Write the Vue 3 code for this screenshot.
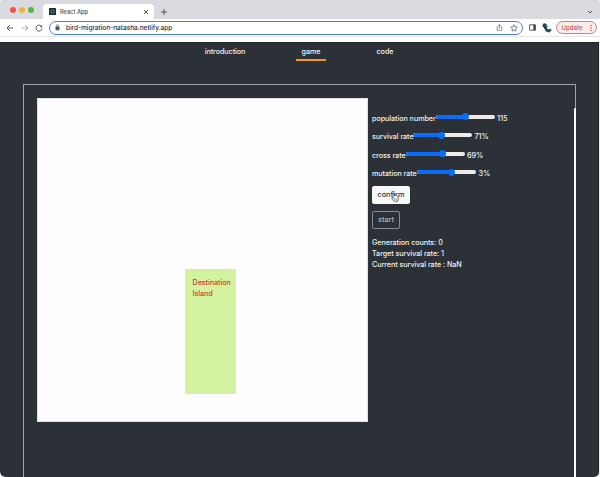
<script setup>
import { ref } from 'vue'

const sliders = ref([
  { label: 'population number', value: '115', width: 63.5, pos: 50 },
  { label: 'survival rate', value: '71%', width: 41, pos: 48 },
  { label: 'cross rate', value: '69%', width: 33.5, pos: 62 },
  { label: 'mutation rate', value: '3%', width: 45, pos: 59 }
])
</script>

<template>
  <div class="window">
    <header class="tabstrip">
      <div class="lights"><i class="red"></i><i class="yellow"></i><i class="green"></i></div>
      <div class="tab">
        <svg class="favicon" viewBox="0 0 8 8"><rect width="8" height="8" rx="1" fill="#20242a" /><g fill="none" stroke="#3c8797" stroke-width=".5"><ellipse cx="4" cy="4" rx="3" ry="1.2" /><ellipse cx="4" cy="4" rx="3" ry="1.2" transform="rotate(60 4 4)" /><ellipse cx="4" cy="4" rx="3" ry="1.2" transform="rotate(120 4 4)" /></g></svg>
        <span>React App</span>
        <svg class="close" viewBox="0 0 6 6"><path d="M1 1 5 5M5 1 1 5" /></svg>
      </div>
      <svg class="plus" viewBox="0 0 8 8"><path d="M4 1v6M1 4h6" /></svg>
      <svg class="chevron" viewBox="0 0 6 6"><path d="m1 2 2 2 2-2" /></svg>
    </header>
    <div class="toolbar">
      <svg class="nav back" viewBox="0 0 8 8"><path d="M7 4H1M4 1 1 4l3 3" /></svg>
      <svg class="nav forward" viewBox="0 0 8 8"><path d="M1 4h6M4 1l3 3-3 3" /></svg>
      <svg class="nav reload" viewBox="0 0 8 8"><path d="M6.5 2.4A3 3 0 1 0 7 4.5" /><path d="M7.2.8v2.4H4.8z" fill="#4a4d51" stroke="none" /></svg>
      <div class="address">
        <svg class="lock" viewBox="0 0 5 7"><rect x=".5" y="2.6" width="4" height="3.6" rx=".4" fill="#4f5256" /><path d="M1.4 3V1.8a1.1 1.1 0 0 1 2.2 0V3" fill="none" stroke="#4f5256" stroke-width=".7" /></svg>
        <span>bird-migration-natasha.netlify.app</span>
        <svg class="share" viewBox="0 0 7 7"><path d="M2.3 2.8H1.1v3.5h4.8V2.8H4.7M3.5 4.6V.7M2.2 1.9 3.5.6l1.3 1.3" /></svg>
        <svg class="star" viewBox="0 0 8 8"><path d="m4 .8 1 2.1 2.3.3-1.7 1.6.4 2.3-2-1.1-2 1.1.4-2.3L.7 3.2 3 2.9z" /></svg>
      </div>
      <svg class="panel" viewBox="0 0 7 7"><path d="M.6.8h5.8v5.4H.6z" fill="none" stroke="#46494d" stroke-width=".9" /><path d="M4.3.8h2.1v5.4H4.3z" fill="#46494d" /></svg>
      <svg class="avatar" viewBox="0 0 10 10"><path d="M1.2.7Q2.8-.3 4.4 1.2L5.5 3.7 4.9 5.8 2.4 5.6.3 3z" fill="#18435a" /><path d="M4.5 6.2 9.5 6Q9.7 8.6 7.2 9.4 4 9.3 4.5 6.2z" fill="#20547b" /><path d="m2 5 2.5.1 2 2.7-2.2.9z" fill="#25354a" /><circle cx="4.6" cy="2.8" r=".9" fill="#6b9d65" /></svg>
      <button class="update"><span>Update</span><svg viewBox="0 0 2 8"><g fill="#c45454"><circle cx="1" cy="1.4" r=".75" /><circle cx="1" cy="4" r=".75" /><circle cx="1" cy="6.6" r=".75" /></g></svg></button>
    </div>
    <main class="page">
      <nav class="menu"><a class="intro">introduction</a><a class="game">game</a><a class="code">code</a></nav>
      <section class="frame">
        <div class="board">
          <div class="island">Destination<br />Island</div>
        </div>
        <div class="controls">
          <div v-for="s in sliders" :key="s.label" class="row">
            <label :style="{ width: s.width + 'px' }">{{ s.label }}</label>
            <div class="track"><div class="fill" :style="{ width: s.pos + '%' }"><i class="thumb"></i></div></div>
            <span class="value">{{ s.value }}</span>
          </div>
          <button class="confirm">confirm
            <svg class="pointer" viewBox="0 0 8 10"><path d="M2.2 5.8V1.2q.7-.9 1.3 0v2.6l.3-.6q.7-.5 1.1.1l.2.4q.7-.5 1.1.1l.1.4q.8-.3 1 .4v2.1L6.5 9.2H3.2L.7 6.1q.1-1 1.5-.3z" fill="#fff" stroke="#24272a" stroke-width=".7" /><path d="M3.8 6v1.8M5.2 6v1.8" stroke="#24272a" stroke-width=".5" /></svg>
          </button>
          <button class="start">start</button>
          <div class="stats"><p>Generation counts: 0</p><p>Target survival rate: 1</p><p>Current survival rate : NaN</p></div>
        </div>
        <div class="scrollbar"></div>
      </section>
    </main>
  </div>
</template>

<style>
body { margin: 0; background: #fff; overflow: hidden; }
</style>
<style scoped>
* { box-sizing: border-box; }
svg { display: block; flex: none; fill: none; }
button { font: inherit; }
.window { width: 600px; height: 477px; overflow: hidden; border-radius: 3px 3px 5px 5px; background: #e9eaec; font-family: Inter, "Liberation Sans", sans-serif; font-size: 7.3px; font-weight: 500; letter-spacing: -.06px; }
.tabstrip { height: 19px; width: 600px; background: #d9dbe1; display: flex; align-items: center; }
.lights { display: flex; gap: 3.2px; margin-left: 9.5px; width: 33.5px; }
.lights i { width: 6px; height: 6px; border-radius: 50%; flex: none; }
.red { background: #f15348; }
.yellow { background: #efb33b; }
.green { background: #53b93a; }
.tab { width: 111px; height: 15px; margin-top: 4px; border-radius: 4px 4px 0 0; background: #fff; display: flex; align-items: center; padding: 0 5px 0 6px; font-size: 5.8px; color: #505257; }
.favicon { width: 7px; height: 7px; margin-right: 4px; }
.close { width: 6px; height: 6px; margin-left: auto; stroke: #505257; stroke-width: 1; }
.plus { width: 8px; height: 8px; margin: 4px 0 0 6px; stroke: #53565c; stroke-width: 1; }
.chevron { width: 6px; height: 6px; margin: 4px 7px 0 auto; stroke: #54575c; stroke-width: 1; }
.toolbar { height: 23px; width: 600px; background: linear-gradient(#e7e7ea, #e7e7ea) 0 17px / 100% 1px no-repeat #fff; display: flex; align-items: center; padding: 0 1px 6px 6px; }
.nav { width: 8px; height: 8px; margin-right: 6.5px; stroke: #4a4d51; stroke-width: .9; }
.forward { stroke: #9fa1a4; }
.address { width: 474px; height: 14px; margin-left: -.5px; border: 1.5px solid #4a7ed5; border-radius: 7px; display: flex; align-items: center; flex: none; color: #303236; font-size: 6.6px; padding: 0 4px 0 5px; }
.lock { width: 5px; height: 7px; margin-right: 6px; }
.share { width: 7px; height: 7px; margin-left: auto; stroke: #66696d; stroke-width: .7; }
.star { width: 8px; height: 8px; margin-left: 7px; stroke: #4a4d51; stroke-width: .7; }
.panel { width: 7px; height: 7px; margin-left: 6px; }
.avatar { width: 10px; height: 10px; margin-left: 6px; }
.update { width: 41px; height: 13px; margin-left: 3.5px; padding: 0 4px 0 5px; border: 1px solid #d67a7a; border-radius: 7px; background: #fceceb; color: #c45454; display: flex; align-items: center; justify-content: space-between; font-size: 6.1px; flex: none; }
.update svg { width: 2px; height: 8px; }
.page { width: 599px; height: 435px; background: #2c3137; color: #f0f1f2; border-top: 1px solid #23272c; border-right: 1px solid #22272c; border-radius: 0 0 5px 5px; }
.menu { height: 41px; display: flex; align-items: flex-start; }
.menu a { height: 18px; padding-top: 3px; line-height: 11px; text-align: center; border-bottom: 2px solid transparent; flex: none; font-size: 7.2px; }
.menu .intro { margin-left: 199px; width: 52px; }
.menu .game { margin-left: 45px; width: 30px; border-color: #f49a12; }
.menu .code { margin-left: 44px; width: 30px; }
.frame { width: 553px; height: 410px; margin-left: 23px; border: 1px solid #a1a5a8; display: flex; align-items: flex-start; }
.board { width: 331px; height: 324px; margin: 13px 4px 0 13px; background: #fffdff; border: 1px solid #dfe0e3; padding: 170px 0 0 147px; flex: none; }
.island { width: 51px; height: 125px; background: #d4f3a1; color: #ce3b35; padding: 8px 0 0 7.5px; line-height: 11px; font-size: 7.2px; white-space: nowrap; }
.controls { width: 200px; padding-top: 24px; flex: none; }
.row { height: 18.55px; display: flex; align-items: center; line-height: 11px; }
.row label { white-space: nowrap; flex: none; font-size: 7.2px; }
.track { width: 59px; height: 4px; margin-top: -3px; border-radius: 2px; background: #eeeaed; flex: none; }
.fill { height: 4px; border-radius: 2px 0 0 2px; background: #0b6cf7; display: flex; align-items: center; justify-content: flex-end; }
.thumb { width: 7px; height: 7px; margin-right: -3.5px; border-radius: 50%; background: #0b6cf7; flex: none; }
.value { margin-left: 2.5px; font-size: 7.3px; }
.confirm, .start { display: block; height: 18px; padding: 0; border-radius: 2px; line-height: 16px; font-size: 7.3px; }
.confirm { width: 38px; margin-top: 3px; border: 1px solid #f8f8fa; background: #f8f8fa; color: #303338; position: relative; }
.pointer { position: absolute; left: 18px; top: 5px; width: 8px; height: 10px; }
.start { width: 28px; margin-top: 7px; border: 1px solid #858a8e; background: transparent; color: #b0b4b7; }
.stats { margin-top: 8px; line-height: 11px; font-size: 7.2px; white-space: nowrap; }
.stats p { margin: 0; }
.scrollbar { width: 2px; height: 387px; margin: 23px -1px 0 auto; border-radius: 2px 2px 0 0; background: #f8f8f8; flex: none; }
</style>
